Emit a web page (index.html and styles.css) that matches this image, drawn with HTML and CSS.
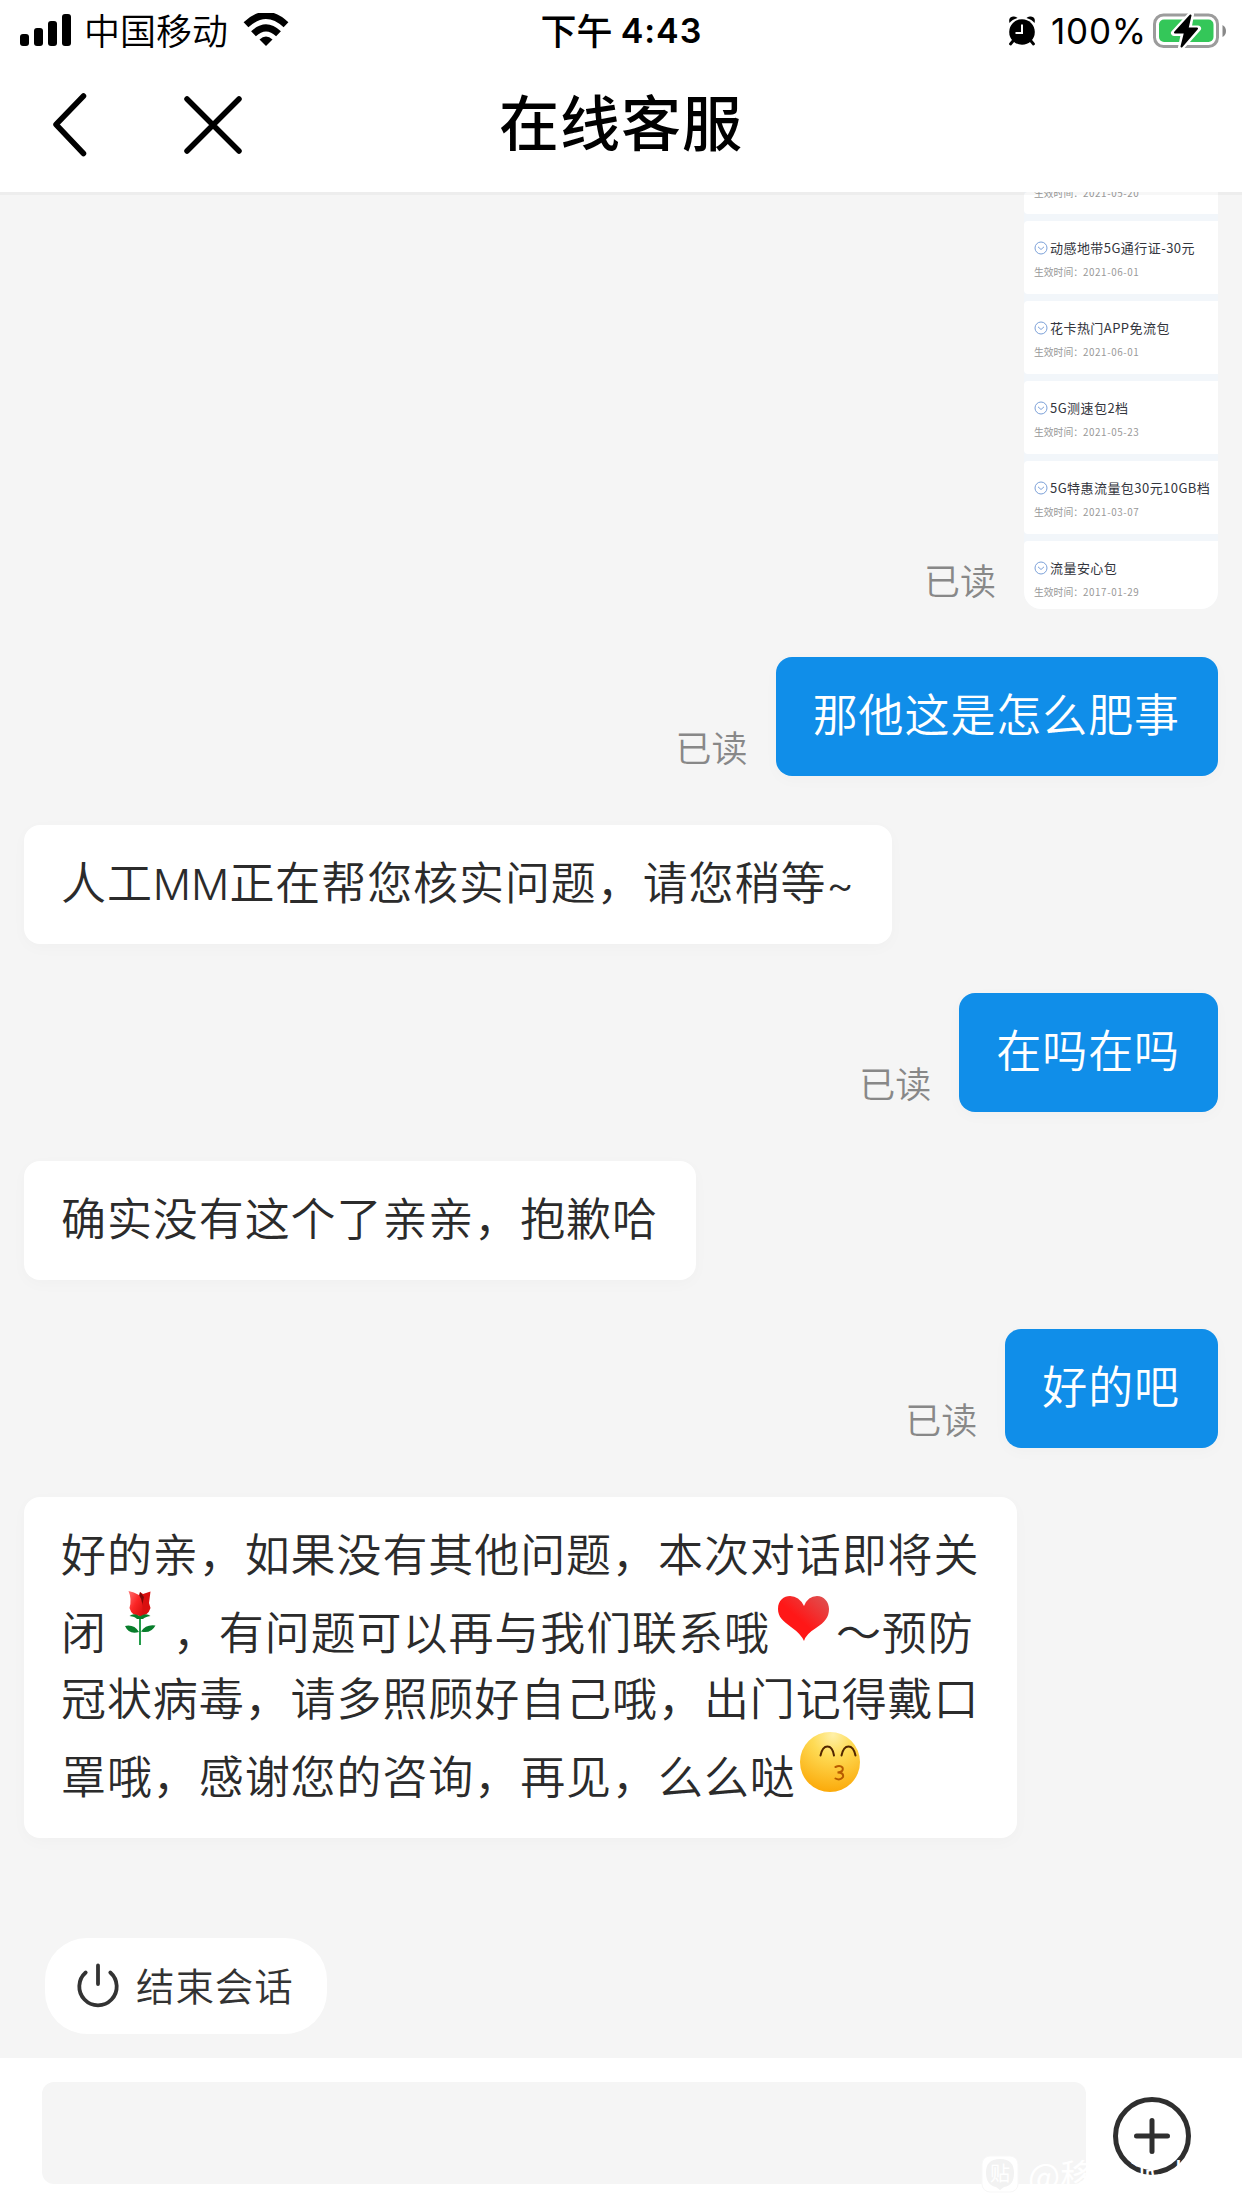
FILE: index.html
```html
<!DOCTYPE html>
<html lang="zh-CN">
<head>
<meta charset="utf-8">
<title>在线客服</title>
<link rel="stylesheet" href="styles.css">
</head>
<body>
<div class="screen">
  <header class="top">
    <div class="status">
      <div class="status-left">
        <svg class="signal" viewBox="0 0 52 33" width="52" height="33"><rect x="0" y="20" width="9" height="12" rx="3"/><rect x="14" y="14" width="9" height="18" rx="3"/><rect x="28" y="7" width="9" height="25" rx="3"/><rect x="42" y="0" width="9" height="32" rx="3"/></svg>
        <span class="carrier">中国移动</span>
        <svg class="wifi" viewBox="0 0 46 34" width="46" height="34"><path d="M3 12.3Q23-6.500 43 12.300" transform="translate(0 -.5)"/><path d="M10.500 20.800Q23 9 35.500 20.800"/><path class="dot" d="M16.500 26.500Q23 20.500 29.500 26.500L23 33Z"/></svg>
      </div>
      <div class="clock"><span class="period">下午</span><span class="digits">4:43</span></div>
      <div class="status-right">
        <svg viewBox="0 0 28 30" width="28" height="30"><circle cx="14" cy="16" r="12.800"/><path d="M1.500 7Q0 1 5 .500Q8 0 9.500 2Q4 3.500 1.500 7ZM26.500 7Q28 1 23 .500Q20 0 18.500 2Q24 3.500 26.500 7Z"/><path d="M5 25L2.500 28M23 25L25.500 28" stroke="#000" stroke-width="2.800" stroke-linecap="round"/><path d="M14 8.500V17H7.500" fill="none" stroke="#fff" stroke-width="2"/></svg>
        <span class="percent">100%</span>
        <svg class="battery" viewBox="0 0 74 36" width="74" height="36"><rect x="1.500" y="2" width="63" height="31.500" rx="9" fill="#fff" stroke="#9c9c9c" stroke-width="3"/><rect x="6" y="6.500" width="54.500" height="22.500" rx="5" fill="#34c759"/><path d="M69.500 12Q73 14 73 18T69.500 24Z" fill="#888"/><path d="M38 1.500L21 20H31L28 34.500L45 15.500H35.500Z" fill="#000" stroke="#fff" stroke-width="6" stroke-linejoin="round"/><path d="M37.500 2.500L22 19.500H32L28.500 33.500L44 15.500H34.500Z" fill="#000" stroke="#000" stroke-width="2" stroke-linejoin="round"/></svg>
      </div>
    </div>
    <nav class="nav">
      <div class="nav-buttons">
        <svg viewBox="0 0 34 64" width="34" height="64"><path d="M30.500 3L3 31.500L30.500 60.500"/></svg>
        <svg viewBox="0 0 58 58" width="58" height="58"><path d="M3 3L55 55M55 3L3 55"/></svg>
      </div>
      <h1 class="title">在线客服</h1>
      <div></div>
    </nav>
  </header>

  <main class="chat">
    <div class="row mine picture">
      <span class="read">已读</span>
      <div class="thumb">
        <div class="pack first"><p class="pack-date">生效时间：<span>2021-05-20</span></p></div>
        <div class="pack"><p class="pack-name"><svg class="tick" viewBox="0 0 14 14"><circle cx="7" cy="7" r="6"/><path d="M4 5.800L7 8.500L10 5.800"/></svg>动感地带5G通行证-30元</p><p class="pack-date">生效时间：<span>2021-06-01</span></p></div>
        <div class="pack"><p class="pack-name"><svg class="tick" viewBox="0 0 14 14"><circle cx="7" cy="7" r="6"/><path d="M4 5.800L7 8.500L10 5.800"/></svg>花卡热门APP免流包</p><p class="pack-date">生效时间：<span>2021-06-01</span></p></div>
        <div class="pack"><p class="pack-name"><svg class="tick" viewBox="0 0 14 14"><circle cx="7" cy="7" r="6"/><path d="M4 5.800L7 8.500L10 5.800"/></svg>5G测速包2档</p><p class="pack-date">生效时间：<span>2021-05-23</span></p></div>
        <div class="pack"><p class="pack-name"><svg class="tick" viewBox="0 0 14 14"><circle cx="7" cy="7" r="6"/><path d="M4 5.800L7 8.500L10 5.800"/></svg>5G特惠流量包30元10GB档</p><p class="pack-date">生效时间：<span>2021-03-07</span></p></div>
        <div class="pack last"><p class="pack-name"><svg class="tick" viewBox="0 0 14 14"><circle cx="7" cy="7" r="6"/><path d="M4 5.800L7 8.500L10 5.800"/></svg>流量安心包</p><p class="pack-date">生效时间：<span>2017-01-29</span></p></div>
      </div>
    </div>

    <div class="row mine"><span class="read">已读</span><div class="bubble blue">那他这是怎么肥事</div></div>
    <div class="row"><div class="bubble">人工<span class="latin">MM</span>正在帮您核实问题，请您稍等<span class="latin">~</span></div></div>
    <div class="row mine"><span class="read">已读</span><div class="bubble blue">在吗在吗</div></div>
    <div class="row"><div class="bubble">确实没有这个了亲亲，抱歉哈</div></div>
    <div class="row mine"><span class="read">已读</span><div class="bubble blue">好的吧</div></div>
    <div class="row">
      <div class="bubble long">
        <div class="line">好的亲，如果没有其他问题，本次对话即将关</div>
        <div class="line with-emoji"><span>闭</span><svg class="emoji" viewBox="0 0 66 60"><defs><linearGradient id="petal" x1="0" y1="0" x2="1" y2="1"><stop offset="0" stop-color="#ff7474"/><stop offset=".5" stop-color="#fb2525"/><stop offset="1" stop-color="#d40d0d"/></linearGradient></defs><path d="M33 27V57" stroke="#249b4a" stroke-width="2"/><path d="M33 4L36 6L43.500 3.500L42 15L43.500 20Q41 28 33 28Q30 18 33 4Z" fill="#d90f0f"/><path d="M33 4L37 9L34 22L32 8Z" fill="#7c0808"/><path d="M21.500 3Q27 4 32 7Q37 14 35 28Q25 29 22.500 20Q25 11 21.500 3Z" fill="url(#petal)"/><path d="M22.500 28Q27 24.500 33 28.500Q39 24.500 43.500 28Q38 29 36 31H30Q28 28.500 22.500 28Z" fill="#087d2b"/><path d="M18 38Q27 36 32 44Q22 47 18 38ZM48.500 37.500Q39 36 34 43.500Q44 46 48.500 37.500Z" fill="#087d2b"/></svg><span>，有问题可以再与我们联系哦</span><svg class="emoji" viewBox="0 0 66 60"><defs><linearGradient id="love" x1="0" y1="1" x2="1" y2="0"><stop offset=".45" stop-color="#ff1717"/><stop offset="1" stop-color="#dc5555"/></linearGradient></defs><path d="M34 53Q31 46 21 39C13 33 8 29 8 21C8 12 14 8 20 8Q29 8 34 18Q38 8 47 8C54 8 59 14 59 21C59 29 55 34 46 40Q36 46 34 53Z" fill="url(#love)"/></svg><span>～预防</span></div>
        <div class="line">冠状病毒，请多照顾好自己哦，出门记得戴口</div>
        <div class="line with-emoji"><span>罩哦，感谢您的咨询，再见，么么哒</span><svg class="emoji" viewBox="0 0 66 60"><defs><radialGradient id="face" cx=".55" cy=".05" r="1"><stop offset="0" stop-color="#fff0a8"/><stop offset=".35" stop-color="#fedb55"/><stop offset="1" stop-color="#fba604"/></radialGradient></defs><circle cx="34" cy="30" r="30" fill="url(#face)"/><g fill="none" stroke-width="2" stroke-linecap="round"><path d="M24.500 23.500C27 11.500 36 11.500 38 23.500M45.500 23.500C48 11.500 57 11.500 59.500 23.500" stroke="#512600"/><path d="M39.500 35Q44 33 46.500 35.500Q48 40 41.500 40.500Q48 40.500 47 45Q44 49 39.500 46.500" stroke="#b75b00"/></g></svg></div>
      </div>
    </div>

    <button class="end"><svg viewBox="0 0 42 44" width="42" height="44"><path d="M8.700 8.500A18.700 18.700 0 1 0 33.300 8.500M21 1.500V20"/></svg><span>结束会话</span></button>
  </main>

  <footer class="composer">
    <div class="input"></div>
    <svg class="plus" viewBox="0 0 78 78" width="78" height="78"><circle cx="39" cy="39" r="36.500"/><path d="M39 23.500V54.500M23.500 39H54.500"/></svg>
    <div class="watermark"><svg viewBox="0 0 38 38" width="38" height="38"><rect x="1" y="1" width="36" height="36" rx="8" fill="#fff" stroke="#f7f7f7"/><path d="M19 4C9 4 5 9 5 18C5 26 9 31 15 32L19 35L23 32C30 31 33 26 33 18C33 9 29 4 19 4Z" fill="#f2f2f2"/><text x="19" y="26" text-anchor="middle" font-size="20" fill="#fff">贴</text></svg><span>@移动派卡</span></div>
  </footer>
</div>
</body>
</html>
```
FILE: styles.css
```css
* { box-sizing: border-box; margin: 0; padding: 0; }

body {
  width: 1242px;
  height: 2208px;
  overflow: hidden;
  background: #fff;
  font-family: "Noto Sans CJK SC", sans-serif;
}

.screen { display: flex; flex-direction: column; height: 2208px; }

.top {
  height: 192px;
  flex: none;
  background: #fff;
  box-shadow: 0 3px 0 rgba(0, 0, 0, .03);
  z-index: 1;
}

.status {
  display: grid;
  grid-template-columns: 1fr auto 1fr;
  height: 62px;
  padding: 0 15px 0 20px;
  color: #000;
  font-size: 36px;
  line-height: 62px;
}
.status-left, .status-right, .clock { display: flex; align-items: center; }
.status-left { font-weight: 350; }
.status-right { justify-content: flex-end; }
.signal { margin-top: -2px; }
.carrier { margin: -4px 15px 0 12px; }
.wifi { margin-top: -2px; fill: none; stroke: #000; stroke-width: 7; }
.wifi .dot { fill: #000; stroke: none; }
.clock { font-weight: 500; gap: 8px; padding-right: 4px; }
.period { margin-top: -4px; }
.digits { font-family: Inter, sans-serif; font-weight: 600; font-size: 34px; letter-spacing: 1px; }
.percent { font-family: Inter, sans-serif; font-size: 35px; letter-spacing: .8px; margin: 0 6px 0 15px; }

.nav { display: grid; grid-template-columns: 1fr auto 1fr; align-items: center; height: 126px; }
.nav-buttons { display: flex; align-items: center; gap: 97px; padding-left: 53px; }
.nav-buttons svg { fill: none; stroke: #000; stroke-width: 5.500; stroke-linecap: round; stroke-linejoin: round; }
.title { margin-top: -10px; font-size: 60px; line-height: 90px; font-weight: 500; letter-spacing: 1px; color: #000; }

.chat {
  flex: none;
  height: 1866px;
  background: #f5f5f5;
  display: flex;
  flex-direction: column;
  overflow: hidden;
}
.row { display: flex; margin: 0 24px 49px; }
.row.picture { margin-bottom: 48px; }
.row.mine { justify-content: flex-end; align-items: flex-end; gap: 28px; }
.read { padding-bottom: 3px; font-size: 36px; line-height: 54px; font-weight: 350; color: #888; }

.thumb {
  width: 194px;
  height: 417px;
  display: flex;
  flex-direction: column;
  justify-content: flex-end;
  gap: 7px;
  overflow: hidden;
  background: #f2f6fa;
  border-radius: 0 0 17px 17px;
}
.pack { flex: none; height: 73px; padding: 17px 0 0 10px; background: #fff; border-radius: 4px 0 0 4px; white-space: nowrap; }
.pack.first { height: 22px; padding-top: 0; }
.pack.last { height: 68px; }
.pack-name { display: flex; align-items: center; gap: 2px; height: 20px; font-size: 13px; line-height: 20px; letter-spacing: .45px; color: #33353d; }
.tick { width: 14px; height: 14px; fill: none; stroke: #7ba0d8; stroke-width: 1; }
.pack-date { margin-top: 6px; font-size: 9.800px; line-height: 16px; color: #999; }
.pack.first .pack-date { margin-top: -7px; }
.pack-date span { letter-spacing: .6px; }

.bubble {
  height: 119px;
  padding: 23px 38px 0 37px;
  border-radius: 16px;
  background: #fff;
  box-shadow: 0 4px 16px rgba(0, 0, 0, .025);
  color: #2b2b2b;
  font-size: 45px;
  font-weight: 350;
  line-height: 66px;
  letter-spacing: .92px;
  white-space: nowrap;
}
.bubble.blue { background: #108ee9; color: #fff; }
.bubble.long { height: 341px; }
.latin { font-family: Inter, "Noto Sans CJK SC", sans-serif; font-size: 42.500px; line-height: 1; letter-spacing: 0; }
.line { height: 66px; }
.line.with-emoji { display: flex; align-items: flex-end; height: 78px; }
.emoji { width: 66px; height: 60px; margin-top: 2px; align-self: flex-start; }

.end {
  display: flex;
  align-items: center;
  gap: 17px;
  width: 282px;
  height: 96px;
  margin: 51px 0 0 45px;
  padding-left: 32px;
  border: 0;
  border-radius: 42px;
  background: #fff;
  color: #333;
  font-family: inherit;
  font-size: 38.500px;
  font-weight: 350;
  letter-spacing: .9px;
  white-space: nowrap;
}
.end span { margin-top: -5px; }
.end svg { flex: none; overflow: visible; fill: none; stroke: #333; stroke-width: 3.800; stroke-linecap: round; }

.composer {
  position: relative;
  display: flex;
  align-items: flex-start;
  height: 150px;
  padding: 24px 51px 0 42px;
  background: #fff;
}
.input { width: 1044px; height: 102px; border-radius: 12px; background: #f5f5f5; }
.plus { margin: 15px 0 0 27px; fill: none; stroke: #2f2f2f; stroke-width: 5; stroke-linecap: round; }
.watermark {
  position: absolute;
  left: 981px;
  top: 97px;
  display: flex;
  align-items: center;
  gap: 9px;
  height: 38px;
  color: #fff;
  font-size: 34px;
  white-space: nowrap;
}
```
